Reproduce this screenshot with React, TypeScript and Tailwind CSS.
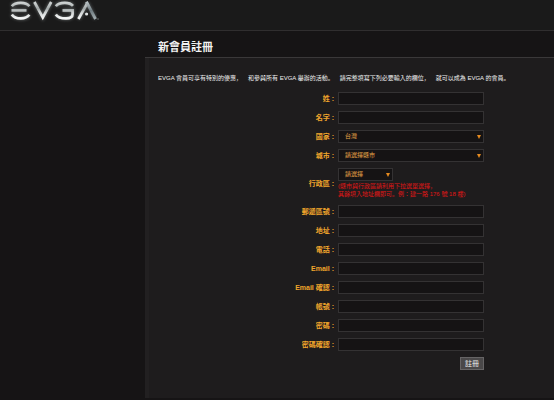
import type { ReactNode } from "react";

type TextField = { id: string; label: string; type: string };

const CLAUSES = [
  "EVGA 會員可享有特別的優惠，",
  "和參與所有 EVGA 舉辦的活動。",
  "請完整填寫下列必要輸入的欄位，",
  "就可以成為 EVGA 的會員。",
];

const NAME_FIELDS: TextField[] = [
  { id: "last-name", label: "姓", type: "text" },
  { id: "first-name", label: "名字", type: "text" },
];

const CONTACT_FIELDS: TextField[] = [
  { id: "zip", label: "郵遞區號", type: "text" },
  { id: "address", label: "地址", type: "text" },
  { id: "phone", label: "電話", type: "tel" },
  { id: "email", label: "Email", type: "email" },
  { id: "email-confirm", label: "Email 確認", type: "email" },
  { id: "account", label: "帳號", type: "text" },
  { id: "password", label: "密碼", type: "password" },
  { id: "password-confirm", label: "密碼確認", type: "password" },
];

function Logo() {
  return (
    <svg viewBox="0 0 104 24" className="h-6 w-[104px]" role="img" aria-label="EVGA">
      <defs>
        <linearGradient id="chrome" x1="0" y1="1" x2="0" y2="20" gradientUnits="userSpaceOnUse">
          <stop offset="0" stopColor="#d8dcdc" />
          <stop offset="0.4" stopColor="#a3a9a9" />
          <stop offset="0.6" stopColor="#cfd3d3" />
          <stop offset="1" stopColor="#ffffff" />
        </linearGradient>
        <linearGradient id="steel" x1="0" y1="1" x2="0" y2="20" gradientUnits="userSpaceOnUse">
          <stop offset="0" stopColor="#c4cccf" />
          <stop offset="0.5" stopColor="#6f7b80" />
          <stop offset="1" stopColor="#a9b3b6" />
        </linearGradient>
        <filter id="glow" x="-10%" y="-30%" width="120%" height="160%">
          <feGaussianBlur stdDeviation="1.5" />
        </filter>
        <g id="mark" fill="none">
          <path d="M29.4 6.2C27.6 3.8 24.8 2.8 20.8 2.8C16.6 2.8 13.6 3.8 11.8 6.2" />
          <path d="M11.5 10.3H26.5" />
          <path d="M11.8 14.4C13.6 17.2 16.6 18.4 20.8 18.4C24.8 18.4 27.6 17.2 29.4 14.8" />
          <path d="M34.4 2L42.8 17.4L51.2 2" />
          <path d="M73 5.8C71.2 3.7 68.6 2.8 64.8 2.8C60.6 2.8 57.6 3.8 55.8 6.2" />
          <path d="M62.5 10.3H72.6V14C72.6 17 70.5 18.4 66 18.4C60.8 18.4 57.6 17.2 55.8 14.4" />
          <path d="M78.4 19L87.4 3" />
        </g>
      </defs>
      <use href="#mark" stroke="#9aa2a2" strokeWidth="3.6" opacity="0.5" filter="url(#glow)" />
      <path
        d="M87.4 3L95.5 19"
        fill="none"
        stroke="#7b868a"
        strokeWidth="3.6"
        opacity="0.5"
        filter="url(#glow)"
      />
      <use href="#mark" stroke="url(#chrome)" strokeWidth="2.7" />
      <path d="M86.4 1.8L95.5 19" fill="none" stroke="url(#steel)" strokeWidth="2.9" />
      <circle cx="86.6" cy="14" r="1.6" fill="#dfe3e3" />
      <circle cx="98" cy="19" r="0.8" fill="#6c7070" />
    </svg>
  );
}

function Row({ id, label, children }: { id: string; label: string; children: ReactNode }) {
  return (
    <div className="grid grid-cols-[54%_1fr] items-center gap-1">
      <label htmlFor={id} className="text-right text-[7px] leading-[13px] font-bold text-[#f0a52c]">
        {label} :
      </label>
      {children}
    </div>
  );
}

function TextRow({ field }: { field: TextField }) {
  return (
    <Row id={field.id} label={field.label}>
      <input
        id={field.id}
        type={field.type}
        className="block h-[13px] w-full border border-[#343233] bg-[#151314] px-1.5 text-[6px] text-[#e8a548] outline-none"
      />
    </Row>
  );
}

function Select({ id, value, className }: { id: string; value: string; className: string }) {
  return (
    <div className={`relative ${className}`}>
      <select
        id={id}
        className="block h-[13px] w-full appearance-none border border-[#343233] bg-[#151314] pr-3 pl-1.5 text-[6px] leading-[11px] text-[#e8a548] outline-none"
      >
        <option>{value}</option>
      </select>
      <svg viewBox="0 0 4 4" className="pointer-events-none absolute top-[5px] right-[3px] size-1">
        <path d="M0 0H4L2 4Z" fill="#e58a1f" />
      </svg>
    </div>
  );
}

export default function App() {
  return (
    <div className="flex min-h-screen flex-col bg-[#161415] pb-0.5 font-['Liberation_Sans','Noto_Sans_CJK_JP',sans-serif]">
      <header className="h-[31px] border-b border-[#302e2f] bg-[#1a1a1a]">
        <a href="#" className="block w-[104px]">
          <Logo />
        </a>
      </header>

      <div className="flex flex-1">
        <aside className="w-[145px] shrink-0" />
        <main className="flex min-w-0 flex-1 flex-col">
          <h1 className="border-b border-[#3a3839] px-[13px] pt-2 pb-0.5 text-[11px] leading-[16px] font-bold text-[#f2f2f2]">
            新會員註冊
          </h1>

          <div className="flex-1 border-l-4 border-[#222021] bg-[#1e1c1d] pt-4 pr-1 pl-[9px]">
            <p className="flex flex-wrap gap-x-1.5 text-[6px] leading-[8px] text-[#f0f0f0]">
              {CLAUSES.map((clause) => (
                <span key={clause}>{clause}</span>
              ))}
            </p>

            <form className="mt-[10px] flex w-full max-w-[326px] flex-col gap-1.5">
              {NAME_FIELDS.map((field) => (
                <TextRow key={field.id} field={field} />
              ))}
              <Row id="country" label="國家">
                <Select id="country" value="台灣" className="w-full" />
              </Row>
              <Row id="city" label="城市">
                <Select id="city" value="請選擇縣市" className="w-full" />
              </Row>
              <Row id="district" label="行政區">
                <div>
                  <Select id="district" value="請選擇" className="w-[55px]" />
                  <p className="py-px text-[6px] leading-[8px] whitespace-nowrap text-[#e01616]">
                    (縣市與行政區請利用下拉選單選擇，
                    <br />
                    其餘填入地址欄即可。例：建一路 176 號 18 樓)
                  </p>
                </div>
              </Row>
              {CONTACT_FIELDS.map((field) => (
                <TextRow key={field.id} field={field} />
              ))}
              <button
                type="submit"
                className="h-[13px] w-6 self-end border border-[#666465] bg-[#4a4849] text-[7px] leading-[11px] text-[#eeeeee]"
              >
                註冊
              </button>
            </form>
          </div>
        </main>
      </div>
    </div>
  );
}
